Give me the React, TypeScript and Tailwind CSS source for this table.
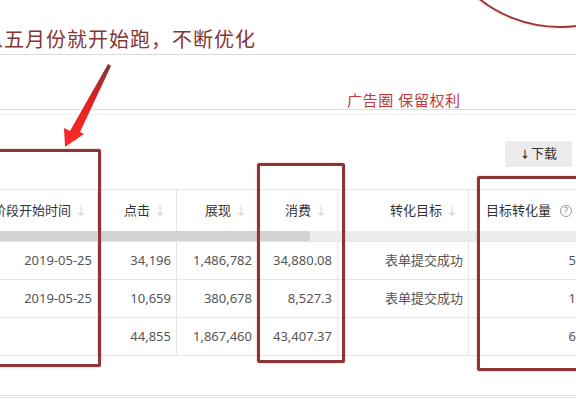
import React from "react";

const font = { fontFamily: '"Noto Sans", "Noto Sans CJK SC", sans-serif' };

function SortArrow() {
  return <span className="text-[#cfcfcf] text-[12px] leading-none">↓</span>;
}

function HeadCell({ label, extra, left }: { label: string; extra?: React.ReactNode; left?: boolean }) {
  return (
    <div
      className={
        "h-[41px] flex items-center gap-[4px] text-[13px] text-[#333] whitespace-nowrap " +
        (left ? "justify-start pl-[17px]" : "justify-end pr-[10px] border-r border-[#e6e6e6]")
      }
    >
      <span>{label}</span>
      {extra}
      <SortArrow />
    </div>
  );
}

function Cell({ v, last }: { v: string; last?: boolean }) {
  return (
    <div
      className={
        "h-[38px] border-b border-[#e6e6e6] flex items-center justify-end pr-[5px] text-[13px] text-[#555] " +
        (last ? "" : "border-r")
      }
    >
      {v}
    </div>
  );
}

const rows = [
  ["2019-05-25", "34,196", "1,486,782", "34,880.08", "表单提交成功", "5"],
  ["2019-05-25", "10,659", "380,678", "8,527.3", "表单提交成功", "1"],
  ["", "44,855", "1,867,460", "43,407.37", "", "6"],
];

export default function App() {
  return (
    <div className="relative w-[576px] h-[408px] overflow-hidden bg-white" style={font}>
      {/* title */}
      <div className="h-[55px] flex items-end pb-[1px] border-b border-[#d9d9d9]">
        <div className="ml-[-17px] text-[20px] leading-[26px] tracking-[1px] text-[#853636] whitespace-nowrap">
          从五月份就开始跑，不断优化
        </div>
      </div>
      {/* watermark row */}
      <div className="h-[55px] flex items-end pl-[347px] border-b border-[#dcdcdc]">
        <div className="text-[15px] leading-[18px] tracking-[0.6px] text-[#c03a3a] whitespace-nowrap">广告圈 保留权利</div>
      </div>
      <div className="h-[5px] border-b border-[#f0f0f0]" />
      {/* download */}
      <div className="flex justify-end pr-[4px] pt-[26px]">
        <div className="w-[67px] h-[26px] bg-[#ececec] flex items-center justify-center text-[13px] text-[#333]">
          <span className="text-[10px] font-bold mr-[1px]">↓</span>下载
        </div>
      </div>
      {/* table */}
      <div className="mt-[22px] ml-[-22px] border-t border-[#e6e6e6]">
        <div className="grid grid-cols-[120px_79px_81px_80px_131px_125px]">
          <HeadCell label="本阶段开始时间" />
          <HeadCell label="点击" />
          <HeadCell label="展现" />
          <HeadCell label="消费" />
          <HeadCell label="转化目标" />
          <HeadCell
            left
            label="目标转化量"
            extra={
              <span className="ml-[5px] mr-[2px] w-[12px] h-[12px] rounded-full border border-[#999] text-[#888] text-[9px] leading-none flex items-center justify-center">
                ?
              </span>
            }
          />
        </div>
        <div className="h-[11px] bg-[#ececec] flex border-b border-[#e6e6e6]">
          <div className="w-[332px] h-full bg-[#d3d3d3]" />
        </div>
        {rows.map((r, i) => (
          <div key={i} className="grid grid-cols-[120px_79px_81px_80px_131px_112px]">
            {r.map((v, j) => (
              <Cell key={j} v={v} last={j === 5} />
            ))}
          </div>
        ))}
      </div>
      <div className="mt-[39px] h-[3px] border-t border-b border-[#e3e3e3]" />

      {/* annotations */}
      <div className="absolute left-[429px] top-[-234px] w-[262px] h-[262px] rounded-full border-2 border-[#9a3a3a] shadow-[0_0_2px_rgba(230,90,90,0.6)]" />
      <div className="absolute left-[-10px] top-[149px] w-[111px] h-[218px] border-[3px] border-[#8e3636] rounded-[2px] shadow-[0_0_2px_rgba(230,90,90,0.6)]" />
      <div className="absolute left-[257px] top-[163px] w-[88px] h-[200px] border-[3px] border-[#8e3636] rounded-[2px] shadow-[0_0_2px_rgba(230,90,90,0.6)]" />
      <div className="absolute left-[477px] top-[176px] w-[120px] h-[195px] border-[3px] border-[#8e3636] rounded-[2px] shadow-[0_0_2px_rgba(230,90,90,0.6)]" />
      <svg className="absolute left-0 top-0" width="576" height="408" viewBox="0 0 576 408">
        <defs>
          <linearGradient id="ag" x1="0" y1="0" x2="0" y2="1">
            <stop offset="0" stopColor="#7a3a3a" />
            <stop offset="0.4" stopColor="#e02020" />
            <stop offset="1" stopColor="#ff2a2a" />
          </linearGradient>
        </defs>
        <polygon
          points="110,65 111,66 80,132 84,134 65,147 64,128 70,131 108,64"
          fill="url(#ag)"
        />
      </svg>
    </div>
  );
}
